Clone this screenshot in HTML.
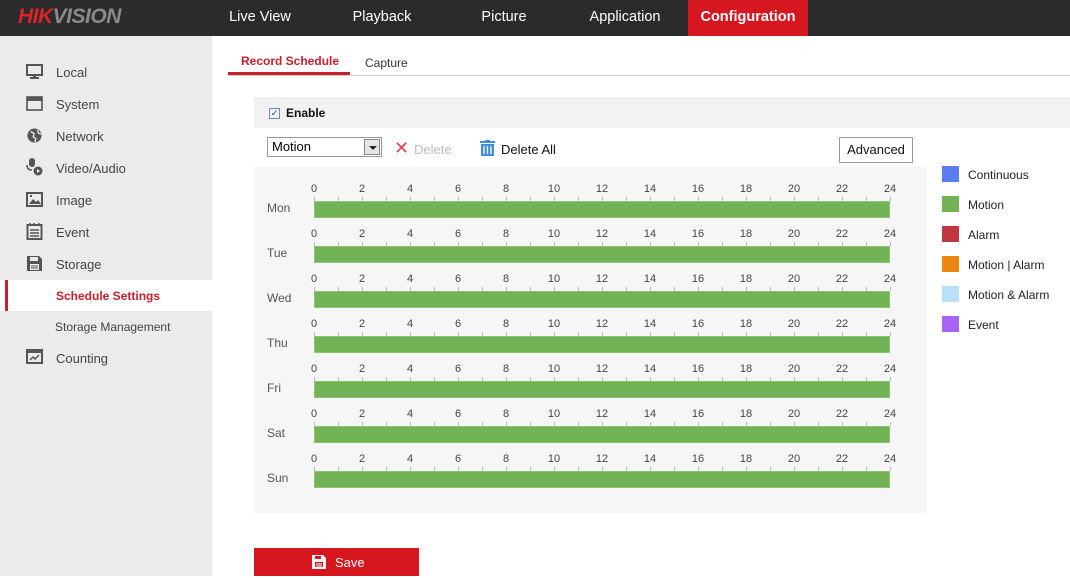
<!DOCTYPE html>
<html><head><meta charset="utf-8"><style>
*{margin:0;padding:0;box-sizing:border-box}
body{width:1070px;height:576px;overflow:hidden;font-family:"Liberation Sans",Arial,sans-serif;background:#fff;position:relative;font-size:13px;color:#333}
.top{position:absolute;left:0;top:0;width:1070px;height:36px;background:#2b2b2b}
.logo{position:absolute;left:18px;top:5px;font-size:21px;font-weight:bold;font-style:italic;letter-spacing:-0.5px}
.nav{position:absolute;top:0;height:36px;line-height:34px;color:#fff;font-size:14.5px;text-align:center}
.side{position:absolute;left:0;top:36px;width:212px;height:540px;background:#ebebeb}
.si{position:absolute;left:56px;font-size:13px;color:#444}
.ic{position:absolute;left:26px;width:17px;height:15px}
.abs{position:absolute}
.num{position:absolute;color:#444;width:20px;text-align:center;font-family:"Liberation Sans",sans-serif;font-size:11px}
.tick{position:absolute;left:314px;width:577px;height:5px;background:repeating-linear-gradient(90deg,#bbb 0 1px,transparent 1px 24px)}
.bar{position:absolute;left:314px;width:576px;height:17px;background:#72b356;border:1px solid #8cc474}
.lg{position:absolute;left:942px;width:17px;height:16px}
.lt{position:absolute;left:968px;font-size:12px;color:#222}
</style></head><body>
<div class="top">
<div class="logo"><span style="color:#d9242b">HIK</span><span style="color:#8a8a8a">VISION</span></div>
<div class="nav" style="left:212px;width:96px">Live View</div>
<div class="nav" style="left:334px;width:96px">Playback</div>
<div class="nav" style="left:456px;width:96px">Picture</div>
<div class="nav" style="left:577px;width:96px">Application</div>
<div class="nav" style="left:688px;width:120px;background:#d7171f;font-weight:bold">Configuration</div>
</div>
<div class="side">
<div class="abs" style="left:0;top:244px;width:212px;height:31px;background:#fff"></div>
<div class="abs" style="left:5px;top:244px;width:3px;height:31px;background:#c8202a"></div>
</div>
<svg class="ic" style="top:64px" viewBox="0 0 17 15"><rect x="1" y="1" width="15" height="10" fill="none" stroke="#555" stroke-width="2"/><rect x="7" y="11" width="3" height="2" fill="#555"/><rect x="4" y="13" width="9" height="2" fill="#555"/></svg>
<svg class="ic" style="top:96px" viewBox="0 0 17 15"><rect x="1" y="1" width="15" height="13" fill="none" stroke="#555" stroke-width="1.6"/><rect x="1" y="1" width="15" height="4" fill="#555"/></svg>
<svg class="ic" style="top:128px" viewBox="0 0 17 17"><circle cx="8.5" cy="8.5" r="8" fill="#555"/><path d="M4 4l4 2-1 4 3 2-1 4M12 2l1 4 3 1" stroke="#ebebeb" stroke-width="1.5" fill="none"/></svg>
<svg class="ic" style="top:158px;height:18px" viewBox="0 0 17 18"><rect x="3" y="0" width="6" height="9" rx="3" fill="#555"/><path d="M1 7q0 5 5 5" stroke="#555" stroke-width="1.5" fill="none"/><circle cx="12" cy="13" r="4.5" fill="#555"/><path d="M11 11l3 2-3 2z" fill="#fff"/></svg>
<svg class="ic" style="top:192px" viewBox="0 0 17 15"><rect x="1" y="1" width="15" height="13" fill="none" stroke="#555" stroke-width="2"/><path d="M3 12l4-5 3 3 2-2 3 4z" fill="#555"/><rect x="4" y="3" width="2" height="2" fill="#555"/></svg>
<svg class="ic" style="top:223px;height:17px" viewBox="0 0 17 17"><rect x="1.5" y="2" width="14" height="14" fill="none" stroke="#555" stroke-width="2"/><path d="M4 0v3M8 0v3M13 0v3M4 7h9M4 10h9M4 13h9" stroke="#555" stroke-width="1.5"/></svg>
<svg class="ic" style="top:255px;height:17px" viewBox="0 0 17 17"><path d="M1 1h12l3 3v12H1z" fill="#555"/><rect x="4" y="2" width="8" height="4" fill="#ebebeb"/><rect x="4" y="9" width="9" height="6" fill="#ebebeb"/><path d="M5 11h7M5 13h7" stroke="#555"/></svg>
<svg class="ic" style="top:349px" viewBox="0 0 17 15"><rect x="1" y="1" width="15" height="13" fill="none" stroke="#555" stroke-width="2"/><rect x="1" y="1" width="15" height="3" fill="#555"/><path d="M4 11l3-3 2 2 4-4" stroke="#555" stroke-width="1.5" fill="none"/></svg>
<div class="si" style="top:65px">Local</div>
<div class="si" style="top:97px">System</div>
<div class="si" style="top:129px">Network</div>
<div class="si" style="top:161px">Video/Audio</div>
<div class="si" style="top:193px">Image</div>
<div class="si" style="top:225px">Event</div>
<div class="si" style="top:257px">Storage</div>
<div class="si" style="top:289px;color:#c8202a;font-weight:bold;font-size:12px">Schedule Settings</div>
<div class="si" style="top:320px;left:55px;font-size:12px">Storage Management</div>
<div class="si" style="top:351px">Counting</div>
<div class="abs" style="left:241px;top:54px;color:#c8202a;font-weight:bold;font-size:12px">Record Schedule</div>
<div class="abs" style="left:365px;top:56px;font-size:12px;color:#333">Capture</div>
<div class="abs" style="left:228px;top:75px;width:842px;height:1px;background:#ccc"></div>
<div class="abs" style="left:228px;top:72px;width:122px;height:3px;background:#c8202a"></div>
<div class="abs" style="left:254px;top:97px;width:816px;height:31px;background:#f2f2f2"></div>
<div class="abs" style="left:269px;top:108px;width:11px;height:11px;border:1px solid #7a8aa6;background:#eef2fa;font-size:9px;line-height:9px;text-align:center;color:#2a4a9a">✓</div>
<div class="abs" style="left:286px;top:106px;font-weight:bold;font-size:12px;color:#111">Enable</div>
<div class="abs" style="left:267px;top:137px;width:115px;height:20px;border:1px solid #999;background:#fff;font-size:13px;color:#000;padding:2px 4px;line-height:14px">Motion</div>
<div class="abs" style="left:364px;top:139px;width:16px;height:16px;border:1px solid #888;background:#e6e6e6"><div style="position:absolute;left:4px;top:6px;border:4px solid transparent;border-top:4px solid #222"></div></div>
<div class="abs" style="left:394px;top:138px;color:#e0414a;font-size:18px;line-height:20px">✕</div>
<div class="abs" style="left:414px;top:142px;color:#bbb;font-size:13px">Delete</div>
<svg class="abs" style="left:480px;top:140px" width="15" height="16" viewBox="0 0 15 16"><rect x="0" y="1" width="15" height="2" fill="#3f8fd2"/><rect x="5" y="0" width="5" height="2" fill="#3f8fd2"/><rect x="1" y="4" width="13" height="12" fill="#3f8fd2"/><path d="M4 6v8M7.5 6v8M11 6v8" stroke="#fff" stroke-width="1.3"/></svg>
<div class="abs" style="left:501px;top:142px;color:#111;font-size:13px">Delete All</div>
<div class="abs" style="left:839px;top:137px;width:74px;height:26px;border:1px solid #999;background:#fff;text-align:center;line-height:24px;font-size:13px;color:#111">Advanced</div>
<div class="abs" style="left:254px;top:167px;width:673px;height:346px;background:#f6f6f6"></div>
<div id="rows"></div>
<div class="lg" style="top:166px;background:#5b7cef"></div><div class="lt" style="top:168px">Continuous</div>
<div class="lg" style="top:196px;background:#72b356"></div><div class="lt" style="top:198px">Motion</div>
<div class="lg" style="top:226px;background:#c0373f"></div><div class="lt" style="top:228px">Alarm</div>
<div class="lg" style="top:256px;background:#e9870e"></div><div class="lt" style="top:258px">Motion | Alarm</div>
<div class="lg" style="top:286px;background:#b9e0fb"></div><div class="lt" style="top:288px">Motion &amp; Alarm</div>
<div class="lg" style="top:316px;background:#a964f5"></div><div class="lt" style="top:318px">Event</div>
<div class="abs" style="left:254px;top:548px;width:165px;height:28px;background:#d7171f;color:#fff;font-size:13px;line-height:30px"><svg style="position:absolute;left:58px;top:7px" width="14" height="14" viewBox="0 0 14 14"><path d="M0 0h11l3 3v11H0z" fill="#fff"/><rect x="3" y="1" width="6" height="3" fill="#d7171f"/><rect x="3" y="7" width="8" height="5" fill="#d7171f"/><path d="M4 9h6M4 11h6" stroke="#fff"/></svg><span style="position:absolute;left:81px">Save</span></div>
<script>
var days=["Mon","Tue","Wed","Thu","Fri","Sat","Sun"],h="";
for(var i=0;i<7;i++){var y=i*45;
h+='<div class="abs" style="left:267px;top:'+(y+201)+'px;font-size:12px;color:#555">'+days[i]+'</div>';
for(var k=0;k<=12;k++){h+='<div class="num" style="left:'+(304+k*48)+'px;top:'+(y+183)+'px">'+(k*2)+'</div>';}
h+='<div class="tick" style="top:'+(y+197)+'px;height:4px"></div>';
h+='<div class="bar" style="top:'+(y+201)+'px"></div>';}
document.getElementById("rows").innerHTML=h;
</script>
</body></html>
